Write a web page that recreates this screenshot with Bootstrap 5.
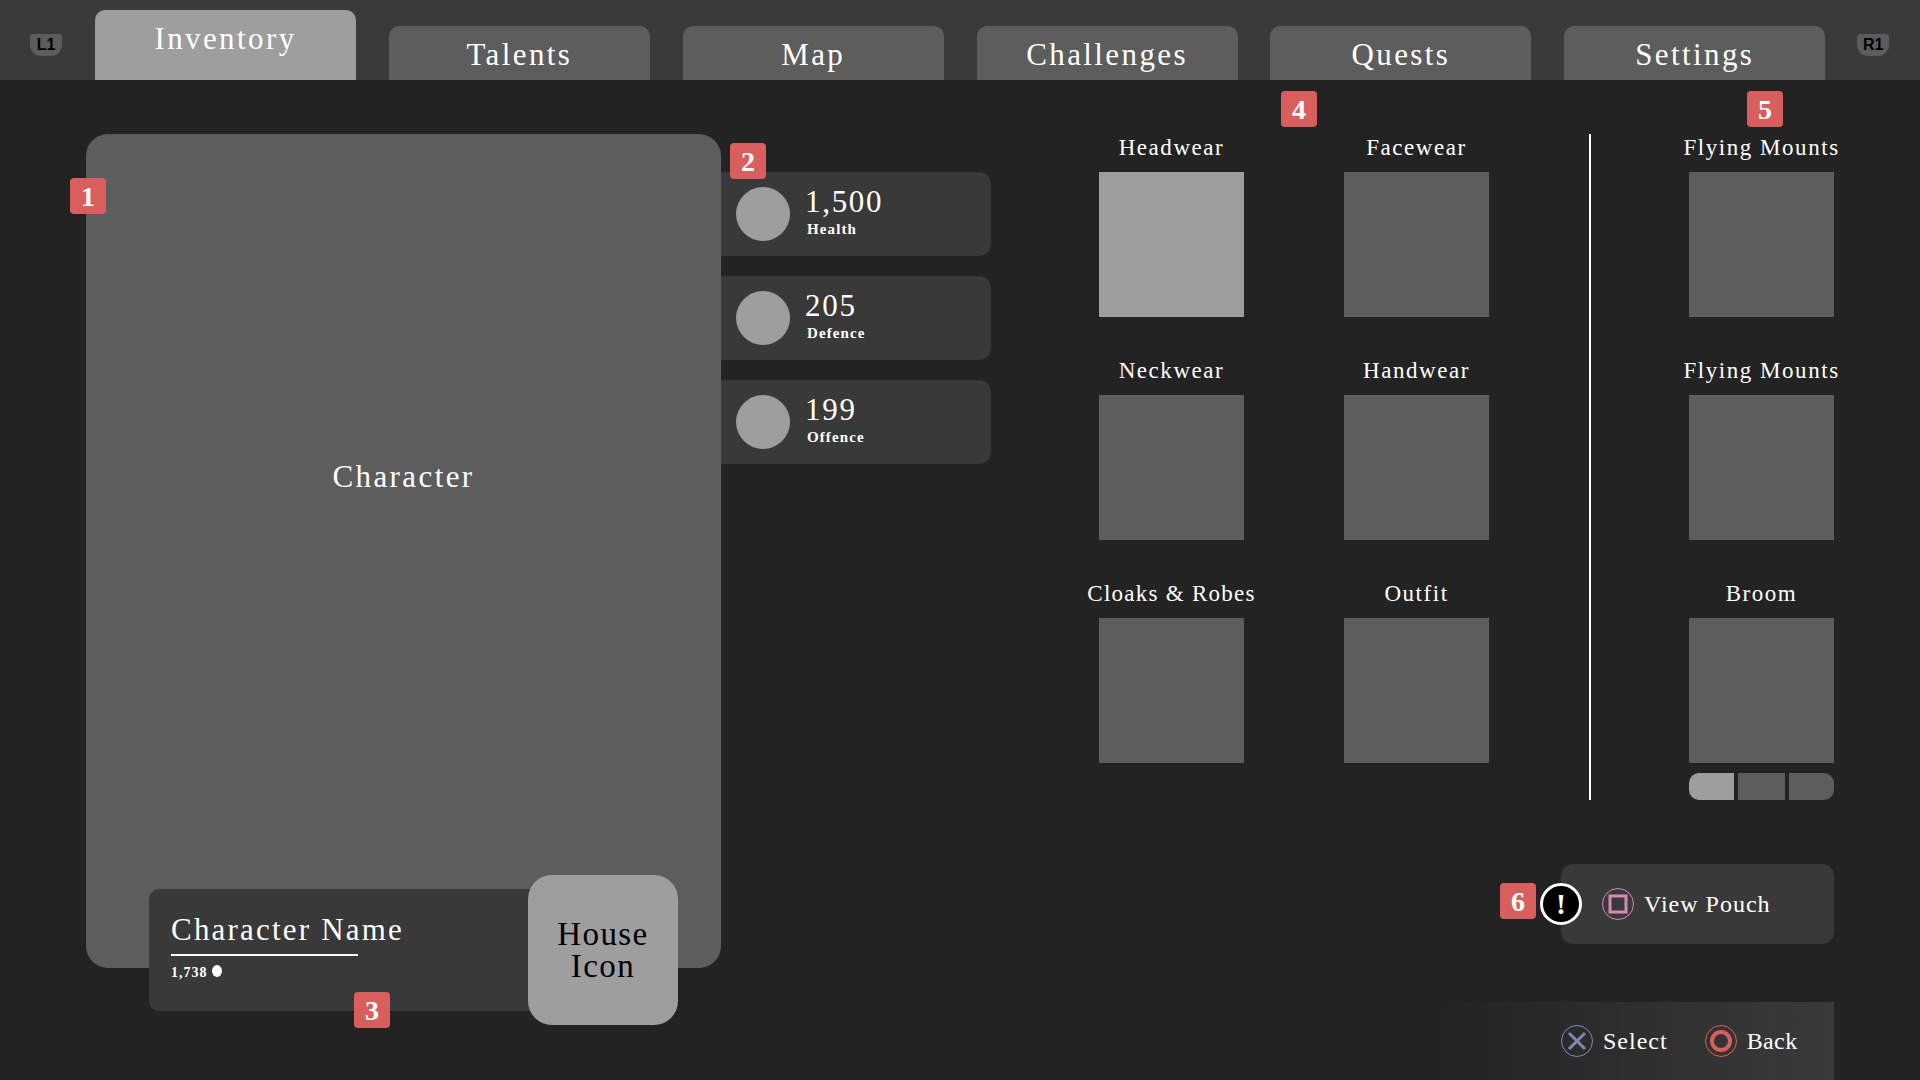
<!DOCTYPE html>
<html lang="en">
  <head>
    <meta charset="utf-8">
    <title>Inventory</title>
    <link href="https://cdn.jsdelivr.net/npm/bootstrap@5.3.3/dist/css/bootstrap.min.css" rel="stylesheet">
    <style>
      body {
        font-family: "Liberation Serif", serif;
        background-color: #232323;
        color: #fff;
        margin: 0;
      }
      .screen {
        width: 1920px;
        height: 1080px;
        position: relative;
        overflow: hidden;
      }
      /* top bar */
      .topbar {
        height: 80px;
        background-color: #3a3a3a;
        padding-left: 30px;
      }
      .shoulder {
        width: 32px;
        height: 22px;
        margin-top: 34px;
        background-color: #5c5c5c;
        color: #000;
        font: bold 16px/22px "Liberation Sans", sans-serif;
        text-align: center;
        border-radius: 3px 3px 11px 11px;
      }
      .shoulder-l { margin-right: 33px; }
      .shoulder-r { margin-left: 32px; }
      .tabs { gap: 32.85px; height: 80px; }
      .tab-item {
        width: 261px;
        height: 54px;
        padding-top: 11px;
        background-color: #5d5d5d;
        border-radius: 10px 10px 0 0;
        text-align: center;
        font-size: 31px;
        line-height: 36px;
        letter-spacing: 2.4px;
      }
      .tab-item.on {
        height: 70px;
        background-color: #9e9e9e;
      }
      /* left side */
      .stage { padding: 54px 86px 0 86px; }
      .char-panel {
        width: 635px;
        height: 834px;
        padding-top: 325px;
        background-color: #5d5d5d;
        border-radius: 22px;
        position: relative;
        z-index: 1;
      }
      .char-title {
        text-align: center;
        font-size: 31px;
        line-height: 36px;
        letter-spacing: 2.4px;
      }
      .nameplate {
        position: absolute;
        left: 63px;
        top: 741px;
        height: 150px;
      }
      .name-box {
        width: 395px;
        height: 122px;
        padding: 23px 22px 0;
        background-color: #393939;
        border-radius: 10px;
      }
      .name-title {
        font-size: 31px;
        line-height: 36px;
        letter-spacing: 2.2px;
        white-space: nowrap;
      }
      .name-rule {
        width: 187px;
        height: 2px;
        margin-top: 6px;
        background-color: #fff;
      }
      .name-level {
        margin-top: 8px;
        font-size: 14px;
        line-height: 18px;
        font-weight: 600;
        letter-spacing: 1px;
      }
      .coin {
        display: inline-block;
        width: 10px;
        height: 12px;
        background-color: #fff;
        border-radius: 50%;
      }
      .house {
        width: 150px;
        height: 150px;
        margin-left: -16px;
        background-color: #9e9e9e;
        border-radius: 24px;
        color: #000;
        font-size: 33px;
        line-height: 32px;
        letter-spacing: 1.4px;
        text-align: center;
      }
      /* stats */
      .stats {
        width: 270px;
        margin-top: 38px;
        gap: 20px;
      }
      .stat-row {
        height: 84px;
        padding-left: 15px;
        background-color: #393939;
        border-radius: 0 12px 12px 0;
      }
      .stat-dot {
        width: 54px;
        height: 54px;
        background-color: #9e9e9e;
        border-radius: 50%;
      }
      .stat-text { margin-left: 15px; margin-top: -4px; }
      .stat-value {
        font-size: 31px;
        line-height: 30px;
        letter-spacing: 1.7px;
      }
      .stat-label {
        margin: 3px 0 0 2px;
        font-size: 15px;
        line-height: 18px;
        font-weight: 600;
        letter-spacing: 1.1px;
      }
      /* equipment */
      .kit { margin-left: 108px; width: 735px; }
      .gear-grid {
        display: grid;
        grid-template-columns: 145px 145px;
        column-gap: 100px;
        row-gap: 40px;
        align-content: start;
      }
      .slot-cell { width: 145px; }
      .slot-name {
        height: 26px;
        margin-bottom: 12px;
        padding-top: 1px;
        font-size: 23px;
        line-height: 26px;
        letter-spacing: 1.55px;
        white-space: nowrap;
        display: flex;
        justify-content: center;
      }
      .slot-name.tight { letter-spacing: 1.25px; }
      .slot-box {
        width: 145px;
        height: 145px;
        background-color: #5d5d5d;
      }
      .slot-box.on { background-color: #9e9e9e; }
      .split {
        width: 2px;
        margin: 0 98px 0 100px;
        background-color: #fff;
      }
      .mounts-col {
        width: 145px;
        gap: 40px;
      }
      .pager {
        gap: 4px;
        height: 27px;
        margin-top: -30px;
      }
      .pager div {
        width: 47px;
        background-color: #5d5d5d;
      }
      .pager div:first-child {
        width: 45px;
        background-color: #9e9e9e;
        border-radius: 10px 0 0 10px;
      }
      .pager div:last-child {
        width: 45px;
        border-radius: 0 10px 10px 0;
      }
      .pouch {
        width: 273px;
        height: 80px;
        margin-top: 64px;
        margin-left: auto;
        padding-left: 41px;
        background-color: #393939;
        border-radius: 12px;
        position: relative;
        font-size: 24px;
        letter-spacing: 1px;
      }
      .alert-dot {
        position: absolute;
        left: -21px;
        top: 19px;
        width: 42px;
        height: 42px;
        background-color: #000;
        border: 3px solid #fff;
        border-radius: 50%;
        font-size: 30px;
        font-weight: bold;
        line-height: 35px;
        letter-spacing: 0;
        text-align: center;
      }
      .pad-btn { width: 32px; height: 32px; flex: none; }
      .pad-label { margin-left: 10px; white-space: nowrap; }
      .hints {
        width: 394px;
        height: 78px;
        margin-top: 58px;
        margin-left: auto;
        padding-left: 121px;
        background: linear-gradient(90deg, #232323 0%, #3a3a3a 100%);
        font-size: 24px;
        letter-spacing: 1px;
      }
      .hint-back { margin-left: 37px; }
      .hint-back + .pad-label { letter-spacing: 0.4px; }
      /* numbered callouts */
      .callout {
        position: absolute;
        width: 36px;
        height: 36px;
        background-color: #d95f5f;
        border-radius: 4px;
        color: #fff;
        font-size: 28px;
        font-weight: bold;
        line-height: 37px;
        text-align: center;
        z-index: 5;
      }
      .c1 { left: 70px; top: 178px; }
      .c2 { left: 730px; top: 143px; }
      .c3 { left: 354px; top: 992px; }
      .c4 { left: 1281px; top: 91px; }
      .c5 { left: 1747px; top: 91px; }
      .c6 { left: 1500px; top: 883px; }
    </style>
  </head>
  <body>
    <div class="screen">
      <!-- Top tabs -->
      <div class="topbar d-flex align-items-start">
        <div class="shoulder shoulder-l">L1</div>
        <div class="tabs d-flex align-items-end">
          <div class="tab-item on">Inventory</div>
          <div class="tab-item">Talents</div>
          <div class="tab-item">Map</div>
          <div class="tab-item">Challenges</div>
          <div class="tab-item">Quests</div>
          <div class="tab-item">Settings</div>
        </div>
        <div class="shoulder shoulder-r">R1</div>
      </div>

      <div class="stage d-flex align-items-start">
        <!-- Character -->
        <div class="char-panel flex-shrink-0">
          <div class="char-title">Character</div>
          <div class="nameplate d-flex align-items-center">
            <div class="name-box">
              <div class="name-title">Character Name</div>
              <div class="name-rule"></div>
              <div class="name-level">1,738 <span class="coin"></span></div>
            </div>
            <div class="house d-flex align-items-center justify-content-center position-relative"><div>House<br>Icon</div></div>
          </div>
        </div>

        <!-- Stats -->
        <div class="stats d-flex flex-column flex-shrink-0">
          <div class="stat-row d-flex align-items-center">
            <div class="stat-dot"></div>
            <div class="stat-text"><div class="stat-value">1,500</div><div class="stat-label">Health</div></div>
          </div>
          <div class="stat-row d-flex align-items-center">
            <div class="stat-dot"></div>
            <div class="stat-text"><div class="stat-value">205</div><div class="stat-label">Defence</div></div>
          </div>
          <div class="stat-row d-flex align-items-center">
            <div class="stat-dot"></div>
            <div class="stat-text"><div class="stat-value">199</div><div class="stat-label">Offence</div></div>
          </div>
        </div>

        <!-- Equipment -->
        <div class="kit flex-shrink-0">
          <div class="d-flex">
            <div class="gear-grid">
              <div class="slot-cell"><div class="slot-name">Headwear</div><div class="slot-box on"></div></div>
              <div class="slot-cell"><div class="slot-name">Facewear</div><div class="slot-box"></div></div>
              <div class="slot-cell"><div class="slot-name">Neckwear</div><div class="slot-box"></div></div>
              <div class="slot-cell"><div class="slot-name">Handwear</div><div class="slot-box"></div></div>
              <div class="slot-cell"><div class="slot-name tight">Cloaks &amp; Robes</div><div class="slot-box"></div></div>
              <div class="slot-cell"><div class="slot-name">Outfit</div><div class="slot-box"></div></div>
            </div>
            <div class="split"></div>
            <div class="mounts-col d-flex flex-column">
              <div class="slot-cell"><div class="slot-name">Flying Mounts</div><div class="slot-box"></div></div>
              <div class="slot-cell"><div class="slot-name">Flying Mounts</div><div class="slot-box"></div></div>
              <div class="slot-cell"><div class="slot-name">Broom</div><div class="slot-box"></div></div>
              <div class="pager d-flex"><div></div><div></div><div></div></div>
            </div>
          </div>

          <div class="pouch d-flex align-items-center">
            <div class="alert-dot">!</div>
            <svg class="pad-btn" viewBox="0 0 32 32">
              <circle cx="16" cy="16" r="15.5" fill="none" stroke="#d88ab4"/>
              <rect x="8" y="8" width="16" height="16" fill="none" stroke="#d88ab4" stroke-width="3"/>
            </svg>
            <span class="pad-label">View Pouch</span>
          </div>

          <div class="hints d-flex align-items-center">
            <svg class="pad-btn" viewBox="0 0 32 32">
              <circle cx="16" cy="16" r="15.5" fill="none" stroke="#7c8ab8"/>
              <path d="M8 8 L24 24 M24 8 L8 24" fill="none" stroke="#7c8ab8" stroke-width="3"/>
            </svg>
            <span class="pad-label">Select</span>
            <svg class="pad-btn hint-back" viewBox="0 0 32 32">
              <circle cx="16" cy="16" r="15.5" fill="none" stroke="#d95f5f"/>
              <circle cx="16" cy="16" r="9" fill="none" stroke="#d95f5f" stroke-width="4"/>
            </svg>
            <span class="pad-label">Back</span>
          </div>
        </div>
      </div>

      <div class="callout c1">1</div>
      <div class="callout c2">2</div>
      <div class="callout c3">3</div>
      <div class="callout c4">4</div>
      <div class="callout c5">5</div>
      <div class="callout c6">6</div>
    </div>
    <script src="https://cdn.jsdelivr.net/npm/bootstrap@5.3.3/dist/js/bootstrap.bundle.min.js"></script>
  </body>
</html>
